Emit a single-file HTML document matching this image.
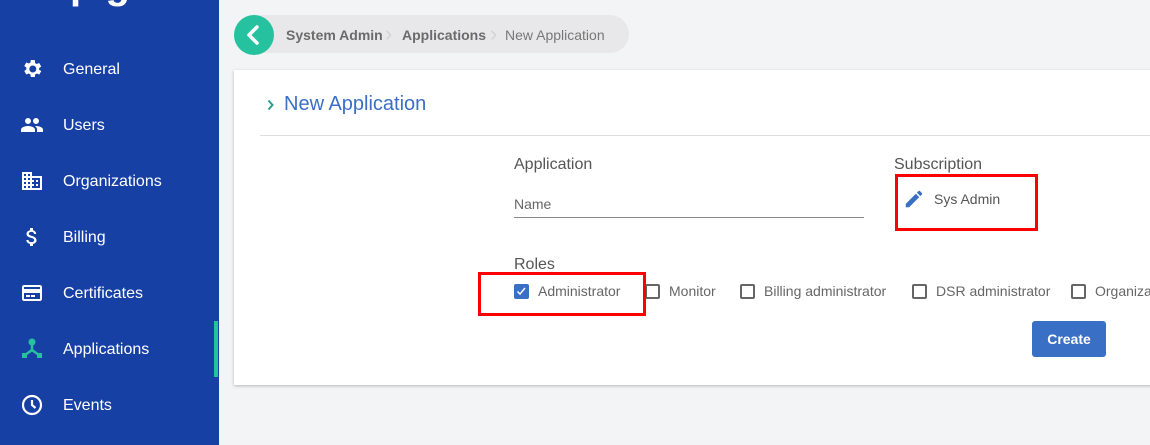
<!DOCTYPE html>
<html><head><style>
*{margin:0;padding:0;box-sizing:border-box}
body{width:1150px;height:445px;overflow:hidden;background:#f3f4f6;font-family:"Liberation Sans",Roboto,sans-serif;position:relative}
.sb{position:absolute;left:0;top:0;width:219px;height:445px;background:#1740a5}
.it{position:absolute;left:0;width:219px;height:56px;color:#fff;font-size:16px}
.it span{position:absolute;left:63px;top:20px}
.it svg{position:absolute;left:20px;top:50%;transform:translateY(-50%)}
.ind{position:absolute;left:214px;top:321px;width:4px;height:56px;background:#26c2a0}
.logo{position:absolute;left:70px;top:-37px;color:#fff;font-size:40px;font-weight:bold}
.bc{position:absolute;left:236px;top:15px;width:393px;height:38px;background:#e8e8ea;border-radius:19px}
.bc span{position:absolute;top:12px;font-size:14px;color:#6b6b6b}
.bc .sep{top:6px;font-size:22px;color:#d4d4d4}
.back{position:absolute;left:234px;top:15px;width:40px;height:40px;border-radius:50%;background:#26c2a0}
.card{position:absolute;left:234px;top:70px;width:930px;height:315px;background:#fff;box-shadow:0 1px 3px rgba(0,0,0,.25)}
.lbl{position:absolute;font-size:16px;color:#555}
.cb{position:absolute;width:15px;height:15px;border:2px solid #666;border-radius:2px;top:284px}
.cbl{position:absolute;top:283px;font-size:14px;color:#666}
.red{position:absolute;border:3px solid #f00}
</style></head><body>
<div class="sb">
<div class="logo">p g</div>
<div class="it" style="top:41px"><svg width="24" height="24" viewBox="0 0 24 24"><path fill="#fff" d="M19.1 12.9a7 7 0 000-1.8l2.1-1.6-2-3.5-2.5 1a7 7 0 00-1.6-.9L14.8 3h-4l-.4 2.6a7 7 0 00-1.6.9l-2.5-1-2 3.5 2.1 1.6a7 7 0 000 1.8l-2.1 1.6 2 3.5 2.5-1a7 7 0 001.6.9l.4 2.6h4l.4-2.6a7 7 0 001.6-.9l2.5 1 2-3.5zM12.8 15.5a3.5 3.5 0 110-7 3.5 3.5 0 010 7z"/></svg><span>General</span></div>
<div class="it" style="top:97px"><svg width="24" height="24" viewBox="0 0 24 24"><path fill="#fff" d="M16 11a3 3 0 100-6 3 3 0 000 6zm-8 0a3 3 0 100-6 3 3 0 000 6zm0 2c-2.3 0-7 1.2-7 3.5V19h14v-2.5C15 14.2 10.3 13 8 13zm8 0c-.3 0-.6 0-1 .1 1.2.8 2 2 2 3.4V19h6v-2.5c0-2.3-4.7-3.5-7-3.5z"/></svg><span>Users</span></div>
<div class="it" style="top:153px"><svg width="24" height="24" viewBox="0 0 24 24"><path fill="#fff" d="M12 7V3H2v18h20V7H12zM6 19H4v-2h2v2zm0-4H4v-2h2v2zm0-4H4V9h2v2zm0-4H4V5h2v2zm4 12H8v-2h2v2zm0-4H8v-2h2v2zm0-4H8V9h2v2zm0-4H8V5h2v2zm10 12h-8v-2h2v-2h-2v-2h2v-2h-2V9h8v10zm-2-8h-2v2h2v-2zm0 4h-2v2h2v-2z"/></svg><span>Organizations</span></div>
<div class="it" style="top:209px"><svg width="24" height="24" viewBox="0 0 24 24"><path fill="#fff" d="M11.8 10.9c-2.3-.6-3-1.2-3-2.1 0-1.1 1-1.9 2.7-1.9 1.8 0 2.4.8 2.5 2.1h2.2c-.1-1.7-1.1-3.3-3.2-3.8V3h-3v2.2c-1.9.4-3.5 1.7-3.5 3.6 0 2.3 1.9 3.5 4.7 4.1 2.5.6 3 1.5 3 2.4 0 .7-.5 1.8-2.7 1.8-2.1 0-2.9-.9-3-2.1H6.3c.1 2.2 1.8 3.5 3.7 3.9V21h3v-2.1c1.9-.4 3.5-1.5 3.5-3.5 0-2.8-2.4-3.8-4.7-4.5z"/></svg><span>Billing</span></div>
<div class="it" style="top:265px"><svg width="24" height="24" viewBox="0 0 24 24"><path fill="#fff" d="M20 4H4c-1.1 0-2 .9-2 2v12c0 1.1.9 2 2 2h16c1.1 0 2-.9 2-2V6c0-1.1-.9-2-2-2zm0 14H4v-6h16v6zm0-10H4V6h16v2zM6 14h4v2H6zm5 0h4v2h-4z"/></svg><span>Certificates</span></div>
<div class="it" style="top:321px"><svg width="24" height="24" viewBox="0 0 24 24"><g fill="#26c2a0" stroke="#26c2a0"><circle cx="12" cy="5" r="3"/><path d="M12 7v6L5 18M12 13l7 5" fill="none" stroke-width="2.5"/><rect x="2" y="16" width="5" height="5" stroke="none"/><rect x="17" y="16" width="5" height="5" stroke="none"/></g></svg><span>Applications</span></div>
<div class="it" style="top:377px"><svg width="24" height="24" viewBox="0 0 24 24"><circle cx="12" cy="12" r="9" fill="none" stroke="#fff" stroke-width="2.2"/><path d="M12 7v5l3.5 3" fill="none" stroke="#fff" stroke-width="2.2"/></svg><span>Events</span></div>
<div class="ind"></div>
</div>
<div class="bc">
<span style="left:50px;font-weight:bold">System Admin</span>
<span class="sep" style="left:149px">&#x203A;</span>
<span style="left:166px;font-weight:bold">Applications</span>
<span class="sep" style="left:254px">&#x203A;</span>
<span style="left:269px;color:#777">New Application</span>
</div>
<div class="back"><svg width="40" height="40" viewBox="0 0 40 40"><path d="M23 12l-8 8 8 8" fill="none" stroke="#fff" stroke-width="3.5" stroke-linecap="round" stroke-linejoin="round"/></svg></div>
<div class="card">
<svg style="position:absolute;left:33px;top:29px" width="8" height="12" viewBox="0 0 8 12"><path d="M1.5 1.5l4 4.5-4 4.5" fill="none" stroke="#26a08a" stroke-width="2"/></svg>
<div style="position:absolute;left:50px;top:23px;color:#3a6fc6;font-size:20px">New Application</div>
<div style="position:absolute;left:26px;top:65px;width:910px;height:1px;background:#ddd"></div>
</div>
<div class="lbl" style="left:514px;top:156px">Application</div>
<div style="position:absolute;left:514px;top:196px;font-size:14px;color:#666">Name</div>
<div style="position:absolute;left:514px;top:217px;width:350px;height:1px;background:#888"></div>
<div class="lbl" style="left:894px;top:156px">Subscription</div>
<svg style="position:absolute;left:903px;top:188px" width="22" height="22" viewBox="0 0 24 24"><path fill="#3a6fc6" d="M3 17.3V21h3.7l11-11-3.7-3.7-11 11zM20.7 7a1 1 0 000-1.4l-2.3-2.3a1 1 0 00-1.4 0l-1.8 1.8 3.7 3.7L20.7 7z"/></svg>
<div style="position:absolute;left:934px;top:191px;font-size:14px;color:#555">Sys Admin</div>
<div class="red" style="left:895px;top:174px;width:143px;height:57px"></div>
<div class="lbl" style="left:514px;top:256px">Roles</div>
<div class="cb" style="left:514px;background:#3a6fc6;border-color:#3a6fc6"><svg width="11" height="11" viewBox="0 0 11 11" style="position:absolute;left:0;top:0"><path d="M1.5 5.5l2.5 2.5 5-6" fill="none" stroke="#fff" stroke-width="1.5"/></svg></div>
<div class="cbl" style="left:538px">Administrator</div>
<div class="cb" style="left:645px"></div><div class="cbl" style="left:669px">Monitor</div>
<div class="cb" style="left:740px"></div><div class="cbl" style="left:764px">Billing administrator</div>
<div class="cb" style="left:912px"></div><div class="cbl" style="left:936px">DSR administrator</div>
<div class="cb" style="left:1071px"></div><div class="cbl" style="left:1095px">Organiza</div>
<div class="red" style="left:478px;top:272px;width:168px;height:44px"></div>
<div style="position:absolute;left:1032px;top:321px;width:74px;height:36px;background:#3a6fc6;border-radius:3px;color:#fff;font-size:14px;font-weight:bold;text-align:center;line-height:36px">Create</div>
</body></html>
